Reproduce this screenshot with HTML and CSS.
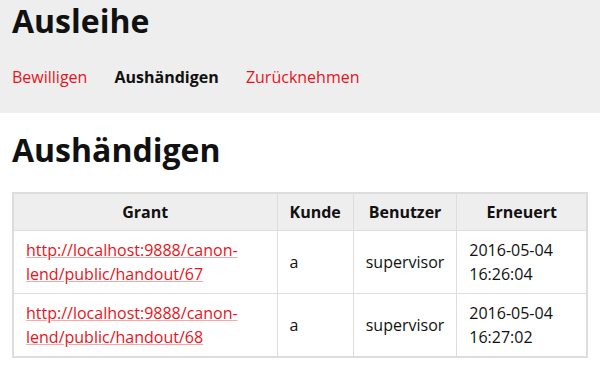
FILE: index.html
```html
<!DOCTYPE html>
<html lang="de">
<head>
    <meta charset="UTF-8">
    <meta name="viewport" content="width=device-width, initial-scale=1.0">
    <title>Ausleihe</title>
    <link rel="stylesheet" href="styles.css">
</head>
<body>
    <header class="top">
        <h1>Ausleihe</h1>
        <nav class="menu">
            <a href="#">Bewilligen</a>
            <span class="current">Aushändigen</span>
            <a href="#">Zurücknehmen</a>
        </nav>
    </header>
    <main class="content">
        <h1>Aushändigen</h1>
        <table class="list">
            <colgroup>
                <col class="col-grant">
                <col class="col-kunde">
                <col class="col-user">
                <col class="col-date">
            </colgroup>
            <thead>
                <tr>
                    <th>Grant</th>
                    <th>Kunde</th>
                    <th>Benutzer</th>
                    <th>Erneuert</th>
                </tr>
            </thead>
            <tbody>
                <tr>
                    <td><a href="#">http://localhost:9888/canon-lend/public/handout/67</a></td>
                    <td>a</td>
                    <td>supervisor</td>
                    <td>2016-05-04 16:26:04</td>
                </tr>
                <tr>
                    <td><a href="#">http://localhost:9888/canon-lend/public/handout/68</a></td>
                    <td>a</td>
                    <td>supervisor</td>
                    <td>2016-05-04 16:27:02</td>
                </tr>
            </tbody>
        </table>
    </main>
</body>
</html>
```

FILE: styles.css
```css
body {
    margin: 0;
    font-family: "Open Sans", sans-serif;
    font-size: 16px;
    color: #111;
    background: #fff;
}
a {
    color: #e8131b;
}
h1 {
    font-size: 32px;
    font-weight: 700;
    margin: 0;
    line-height: 1.2;
}
.top {
    background: #eee;
    padding: 0 12px;
    height: 113px;
    box-sizing: border-box;
}
.top h1 {
    padding-top: 2px;
}
.menu {
    margin-top: 25px;
    line-height: 24px;
}
.menu a,
.menu span {
    margin-right: 23px;
}
.menu a {
    text-decoration: none;
}
.menu .current {
    font-weight: 700;
}
.content {
    padding: 0 12px;
}
.content h1 {
    margin-top: 18px;
    margin-bottom: 23px;
}
.list {
    width: 100%;
    border-collapse: collapse;
    border: 2px solid #ddd;
    line-height: 24px;
}
.list th,
.list td {
    border: 1px solid #ddd;
    padding: 7px 12px;
    text-align: left;
}
.list th {
    background: #eee;
    text-align: center;
    padding: 6px 12px;
}
.list td a {
    text-decoration-color: #f7a8a8;
}
.col-grant { width: 264px; }
.col-kunde { width: 74px; }
.col-user { width: 102px; }
```
